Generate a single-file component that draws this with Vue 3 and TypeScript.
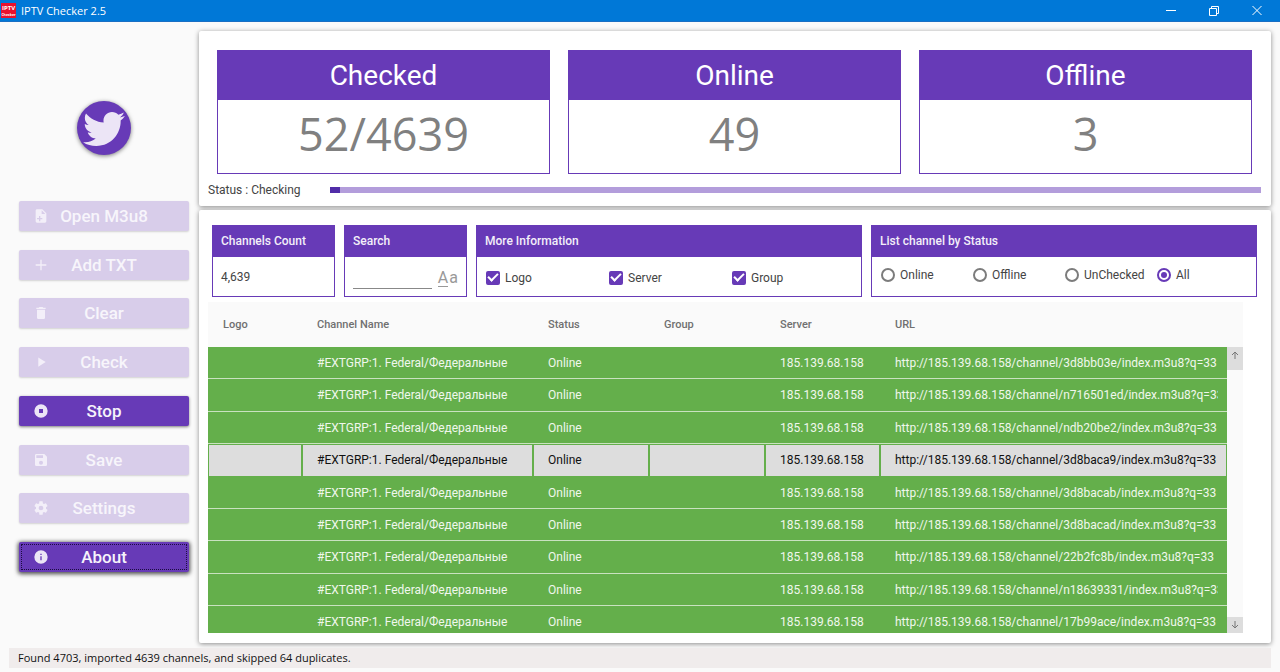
<script setup lang="ts">
import { ref } from 'vue'

interface Action {
  label: string
  icon: string
  enabled: boolean
}

interface Channel {
  name: string
  status: string
  server: string
  url: string
}

const actions: Action[] = [
  {
    label: 'Open M3u8',
    enabled: false,
    icon: 'M13,9H18.5L13,3.5V9M6,2H14L20,8V20A2,2 0 0,1 18,22H6C4.89,22 4,21.1 4,20V4C4,2.89 4.89,2 6,2M11,15V12H9V15H6V17H9V20H11V17H14V15H11Z',
  },
  { label: 'Add TXT', enabled: false, icon: 'M20,13H13V20H11V13H4V11H11V4H13V11H20V13Z' },
  {
    label: 'Clear',
    enabled: false,
    icon: 'M19,4H15.5L14.5,3H9.5L8.5,4H5V6H19M6,19A2,2 0 0,0 8,21H16A2,2 0 0,0 18,19V7H6V19Z',
  },
  { label: 'Check', enabled: false, icon: 'M8,5.14V19.14L19,12.14L8,5.14Z' },
  {
    label: 'Stop',
    enabled: true,
    icon: 'M12,2A10,10 0 0,0 2,12A10,10 0 0,0 12,22A10,10 0 0,0 22,12A10,10 0 0,0 12,2M9,9H15V15H9',
  },
  {
    label: 'Save',
    enabled: false,
    icon: 'M15,9H5V5H15M12,19A3,3 0 0,1 9,16A3,3 0 0,1 12,13A3,3 0 0,1 15,16A3,3 0 0,1 12,19M17,3H5C3.89,3 3,3.9 3,5V19A2,2 0 0,0 5,21H19A2,2 0 0,0 21,19V7L17,3Z',
  },
  {
    label: 'Settings',
    enabled: false,
    icon: 'M12,15.5A3.5,3.5 0 0,1 8.5,12A3.5,3.5 0 0,1 12,8.5A3.5,3.5 0 0,1 15.5,12A3.5,3.5 0 0,1 12,15.5M19.43,12.97C19.47,12.65 19.5,12.33 19.5,12C19.5,11.67 19.47,11.34 19.43,11L21.54,9.37C21.73,9.22 21.78,8.95 21.66,8.73L19.66,5.27C19.54,5.05 19.27,4.96 19.05,5.05L16.56,6.05C16.04,5.66 15.5,5.32 14.87,5.07L14.5,2.42C14.46,2.18 14.25,2 14,2H10C9.75,2 9.54,2.18 9.5,2.42L9.13,5.07C8.5,5.32 7.96,5.66 7.44,6.05L4.95,5.05C4.73,4.96 4.46,5.05 4.34,5.27L2.34,8.73C2.21,8.95 2.27,9.22 2.46,9.37L4.57,11C4.53,11.34 4.5,11.67 4.5,12C4.5,12.33 4.53,12.65 4.57,12.97L2.46,14.63C2.27,14.78 2.21,15.05 2.34,15.27L4.34,18.73C4.46,18.95 4.73,19.03 4.95,18.95L7.44,17.94C7.96,18.34 8.5,18.68 9.13,18.93L9.5,21.58C9.54,21.82 9.75,22 10,22H14C14.25,22 14.46,21.82 14.5,21.58L14.87,18.93C15.5,18.67 16.04,18.34 16.56,17.94L19.05,18.95C19.27,19.03 19.54,18.95 19.66,18.73L21.66,15.27C21.78,15.05 21.73,14.78 21.54,14.63L19.43,12.97Z',
  },
  {
    label: 'About',
    enabled: true,
    icon: 'M13,9H11V7H13M13,17H11V11H13M12,2A10,10 0 0,0 2,12A10,10 0 0,0 12,22A10,10 0 0,0 22,12A10,10 0 0,0 12,2Z',
  },
]
const focused = 'About'

const checked = 52
const total = 4639
const stats = [
  { label: 'Checked', value: `${checked}/${total}` },
  { label: 'Online', value: '49' },
  { label: 'Offline', value: '3' },
]
const progress = `${(checked / total) * 100}%`

const search = ref('')
const info = ref([
  { label: 'Logo', on: true },
  { label: 'Server', on: true },
  { label: 'Group', on: true },
])
const statuses = ['Online', 'Offline', 'UnChecked', 'All']
const status = ref('All')

const ids = ['3d8bb03e', 'n716501ed', 'ndb20be2', '3d8baca9', '3d8bacab', '3d8bacad', '22b2fc8b', 'n18639331', '17b99ace']
const channels: Channel[] = ids.map((id) => ({
  name: '#EXTGRP:1. Federal/Федеральные',
  status: 'Online',
  server: '185.139.68.158',
  url: `http://185.139.68.158/channel/${id}/index.m3u8?q=33`,
}))
const selected = ref(3)
</script>

<template>
  <div class="window">
    <header class="titlebar">
      <svg class="app-icon" viewBox="0 0 15 15" aria-hidden="true">
        <rect width="15" height="15" fill="#e8112d" />
        <text x="7.5" y="7" text-anchor="middle" font-size="6" font-weight="700" fill="#fff">IPTV</text>
        <text x="7.5" y="12.5" text-anchor="middle" font-size="3.5" font-weight="700" fill="#fff">Checker</text>
      </svg>
      <h1>IPTV Checker 2.5</h1>
      <button type="button" aria-label="Minimize">
        <svg viewBox="0 0 12 12"><path d="M1 5.5H11" /></svg>
      </button>
      <button type="button" aria-label="Restore">
        <svg viewBox="0 0 12 12"><path d="M1.5 3.5H8.5V10.5H1.5ZM3.5 3.5V1.5H10.5V8.5H8.5" /></svg>
      </button>
      <button type="button" aria-label="Close">
        <svg viewBox="0 0 12 12"><path d="M1.5 1L10.5 10M10.5 1L1.5 10" /></svg>
      </button>
    </header>

    <div class="body">
      <nav class="sidebar">
        <button class="twitter" type="button" aria-label="Twitter">
          <svg viewBox="0 0 24 24">
            <path
              d="M22.46,6C21.69,6.35 20.86,6.58 20,6.7C20.88,6.15 21.56,5.31 21.88,4.31C21.05,4.81 20.13,5.16 19.16,5.36C18.37,4.5 17.26,4 16,4C13.65,4 11.73,5.92 11.73,8.29C11.73,8.63 11.77,8.96 11.84,9.27C8.28,9.09 5.11,7.38 3,4.79C2.63,5.42 2.42,6.16 2.42,6.94C2.42,8.43 3.17,9.75 4.33,10.5C3.62,10.5 2.96,10.3 2.38,10V10.03C2.38,12.11 3.86,13.85 5.82,14.24C5.46,14.34 5.08,14.39 4.69,14.39C4.42,14.39 4.15,14.36 3.89,14.31C4.43,16 6,17.26 7.89,17.29C6.43,18.45 4.58,19.13 2.56,19.13C2.22,19.13 1.88,19.11 1.54,19.07C3.44,20.29 5.7,21 8.12,21C16,21 20.33,14.46 20.33,8.79C20.33,8.6 20.33,8.42 20.32,8.23C21.16,7.63 21.88,6.87 22.46,6Z"
            />
          </svg>
        </button>
        <div class="actions">
          <button
            v-for="action in actions"
            :key="action.label"
            type="button"
            class="action"
            :class="{ focused: action.label === focused }"
            :disabled="!action.enabled"
          >
            <svg viewBox="0 0 24 24" aria-hidden="true"><path fill-rule="evenodd" :d="action.icon" /></svg>
            <span>{{ action.label }}</span>
          </button>
        </div>
      </nav>

      <main class="content">
        <section class="card summary">
          <div class="stats">
            <div v-for="stat in stats" :key="stat.label" class="stat">
              <h2>{{ stat.label }}</h2>
              <p>{{ stat.value }}</p>
            </div>
          </div>
          <div class="progress-row">
            <span>Status : Checking</span>
            <div class="track" role="progressbar" :aria-valuenow="checked" aria-valuemin="0" :aria-valuemax="total">
              <div class="fill" :style="{ width: progress }"></div>
            </div>
          </div>
        </section>

        <section class="card list">
          <div class="filters">
            <div class="box">
              <h3>Channels Count</h3>
              <div class="box-body">4,639</div>
            </div>
            <div class="box">
              <h3><label for="search">Search</label></h3>
              <div class="box-body search">
                <input id="search" v-model="search" type="text" />
                <button type="button" aria-label="Match case"><u>A</u><span>a</span></button>
              </div>
            </div>
            <div class="box">
              <h3>More Information</h3>
              <div class="box-body checks">
                <label v-for="item in info" :key="item.label">
                  <input v-model="item.on" type="checkbox" />{{ item.label }}
                </label>
              </div>
            </div>
            <div class="box">
              <h3>List channel by Status</h3>
              <div class="box-body radios">
                <label v-for="item in statuses" :key="item">
                  <input v-model="status" type="radio" name="status" :value="item" />{{ item }}
                </label>
              </div>
            </div>
          </div>

          <div class="grid">
            <div class="table-area">
              <table>
                <colgroup>
                  <col class="c-logo" />
                  <col class="c-name" />
                  <col class="c-mid" />
                  <col class="c-mid" />
                  <col class="c-server" />
                  <col />
                </colgroup>
                <thead>
                  <tr>
                    <th>Logo</th>
                    <th>Channel Name</th>
                    <th>Status</th>
                    <th>Group</th>
                    <th>Server</th>
                    <th>URL</th>
                  </tr>
                </thead>
                <tbody>
                  <tr
                    v-for="(channel, i) in channels"
                    :key="channel.url"
                    :class="{ selected: i === selected }"
                    @click="selected = i"
                  >
                    <td></td>
                    <td>{{ channel.name }}</td>
                    <td>{{ channel.status }}</td>
                    <td></td>
                    <td>{{ channel.server }}</td>
                    <td><div class="url">{{ channel.url }}</div></td>
                  </tr>
                </tbody>
              </table>
            </div>
            <div class="scrollbar">
              <button class="up" type="button" aria-label="Scroll up">
                <svg viewBox="0 0 10 10"><path d="M5 9V2M2 5L5 2L8 5" /></svg>
              </button>
              <button type="button" aria-label="Scroll down">
                <svg viewBox="0 0 10 10"><path d="M5 1V8M2 5L5 8L8 5" /></svg>
              </button>
            </div>
          </div>
        </section>
      </main>
    </div>

    <footer>Found 4703, imported 4639 channels, and skipped 64 duplicates.</footer>
  </div>
</template>

<style>
body {
  margin: 0;
  background: #fafafa;
}
</style>

<style scoped>
.window,
.window * {
  box-sizing: border-box;
}

.window {
  --purple: #673ab7;
  display: flex;
  flex-direction: column;
  height: 100vh;
  background: #fafafa;
  color: #444;
  font: 12px/16px Roboto, 'Liberation Sans', sans-serif;
}

button,
input {
  margin: 0;
  padding: 0;
  border: 0;
  font: inherit;
}

h1,
h2,
h3,
p {
  margin: 0;
  font-weight: 400;
}

.titlebar {
  display: flex;
  align-items: center;
  flex: none;
  height: 22px;
  padding: 0 2px 0 1px;
  background: #0078d7;
  border-bottom: 1px solid #1a6fc4;
  color: #fff;
}

.app-icon {
  width: 15px;
  height: 15px;
  font-family: 'Open Sans', sans-serif;
}

.titlebar h1 {
  flex: 1;
  padding-left: 5px;
  font: 11px/16px 'Open Sans', 'Noto Sans', sans-serif;
}

.titlebar button {
  display: grid;
  place-items: center;
  width: 43px;
  height: 20px;
  background: none;
}

.titlebar button svg {
  width: 12px;
  height: 12px;
  fill: none;
  stroke: #fff;
}

.body {
  display: flex;
  flex: 1;
  min-height: 0;
}

.sidebar {
  display: flex;
  flex-direction: column;
  align-items: center;
  flex: none;
  width: 199px;
  padding: 79px 10px 0 19px;
}

.twitter {
  display: grid;
  place-items: center;
  width: 54px;
  height: 54px;
  border-radius: 50%;
  background: var(--purple);
  box-shadow: 0 1px 4px rgba(0, 0, 0, 0.5);
}

.twitter svg {
  width: 48px;
  height: 48px;
  fill: #ece5f6;
}

.actions {
  display: flex;
  flex-direction: column;
  justify-content: space-between;
  width: 100%;
  height: 371px;
  margin-top: 46px;
}

.action {
  display: grid;
  grid-template-columns: 16px 1fr 16px;
  align-items: center;
  height: 30px;
  padding: 0 14px;
  border-radius: 2px;
  background: var(--purple);
  color: #f6f3fb;
  font-size: 17px;
  font-weight: 500;
  line-height: 20px;
  box-shadow: 0 1px 3px rgba(0, 0, 0, 0.5);
}

.action svg {
  width: 16px;
  height: 16px;
  fill: #ece5f6;
}

.action:disabled {
  background: #d8cdea;
  color: #f7f5fb;
  box-shadow: 0 1px 2px rgba(0, 0, 0, 0.16);
}

.action:disabled svg {
  fill: #f3eff9;
}

.action.focused {
  outline: 1px dotted #1c0c40;
  outline-offset: -3px;
  box-shadow: 0 1px 4px 1px rgba(0, 0, 0, 0.7);
}

.content {
  display: flex;
  flex-direction: column;
  flex: 1;
  gap: 4px;
  min-width: 0;
  padding: 9px 9px 5px 0;
}

.card {
  background: #fff;
  border-radius: 2px;
  box-shadow: 0 1px 5px rgba(0, 0, 0, 0.45);
}

.summary {
  padding: 19px 10px 8px 9px;
}

.stats {
  display: grid;
  grid-template-columns: repeat(3, 1fr);
  gap: 18px;
  padding: 0 9px;
}

.stat {
  border: 1px solid var(--purple);
  text-align: center;
}

.stat h2 {
  height: 49px;
  background: var(--purple);
  color: #fff;
  font-size: 28px;
  line-height: 50px;
}

.stat p {
  height: 73px;
  color: #808080;
  font: 45px/68px 'Open Sans', 'Noto Sans', sans-serif;
}

.progress-row {
  display: flex;
  align-items: center;
  height: 16px;
  margin-top: 8px;
}

.progress-row span {
  width: 122px;
}

.track {
  flex: 1;
  height: 6px;
  background: #b39ddb;
}

.fill {
  height: 100%;
  background: #512da8;
}

.list {
  display: flex;
  flex-direction: column;
  flex: 1;
  min-height: 0;
  padding: 15px 9px 10px;
}

.filters {
  display: grid;
  grid-template-columns: minmax(0, 123fr) minmax(0, 123fr) minmax(0, 386fr) minmax(0, 386fr);
  gap: 9px;
  padding: 0 5px 0 4px;
}

.box {
  border: 1px solid var(--purple);
}

.box h3 {
  height: 31px;
  padding: 0 8px;
  background: var(--purple);
  color: #f3eff9;
  font-size: 12px;
  font-weight: 500;
  line-height: 31px;
  white-space: nowrap;
}

.box-body {
  display: flex;
  align-items: center;
  height: 39px;
  padding: 0 8px;
}

.search {
  gap: 6px;
}

.search input {
  flex: 1;
  min-width: 0;
  height: 24px;
  border-bottom: 1px solid #888;
  background: none;
  outline: none;
}

.search button {
  display: flex;
  align-items: flex-start;
  gap: 1px;
  margin-top: 4px;
  background: none;
  color: #999;
  font-size: 16px;
  line-height: 16px;
}

.search u {
  border-bottom: 1px solid #999;
  text-decoration: none;
}

.checks label,
.radios label {
  display: flex;
  align-items: center;
  gap: 5px;
  flex: none;
}

.checks {
  padding-top: 2px;
}

.checks label {
  width: 123px;
}

.radios {
  padding-bottom: 4px;
}

.radios label {
  width: 92px;
}

.box-body input[type='checkbox'],
.box-body input[type='radio'] {
  display: grid;
  place-items: center;
  flex: none;
  width: 14px;
  height: 14px;
  margin-left: 1px;
  appearance: none;
}

.box-body input[type='checkbox'] {
  border: 2px solid #666;
  border-radius: 2px;
}

.box-body input[type='checkbox']:checked {
  border-color: var(--purple);
  background: var(--purple);
}

.box-body input[type='checkbox']:checked::after {
  width: 10px;
  height: 6px;
  margin-bottom: 3px;
  border: solid #fff;
  border-width: 0 0 2px 2px;
  box-sizing: border-box;
  content: '';
  transform: rotate(-45deg);
}

.box-body input[type='radio'] {
  border: 2px solid #7c7c7c;
  border-radius: 50%;
}

.box-body input[type='radio']:checked {
  border-color: var(--purple);
}

.box-body input[type='radio']:checked::after {
  width: 6px;
  height: 6px;
  border-radius: 50%;
  background: var(--purple);
  content: '';
}

.grid {
  display: flex;
  flex: 1;
  min-height: 0;
  margin: 5px 19px 0 0;
  overflow: hidden;
  background: #fafafa;
}

.table-area {
  flex: 1;
  min-width: 0;
}

table {
  width: 100%;
  table-layout: fixed;
  border-collapse: separate;
  border-spacing: 0;
}

.c-logo {
  width: 94px;
}

.c-name {
  width: 231px;
}

.c-mid {
  width: 116px;
}

.c-server {
  width: 115px;
}

th {
  height: 45px;
  padding: 0 0 0 15px;
  color: #707070;
  font-size: 11px;
  font-weight: 500;
  text-align: left;
}

td {
  height: 32px;
  padding: 0 9px 1px 15px;
  background: #64af4b;
  box-shadow: inset 0 -1px #c9e2c0;
  color: #f0f7ed;
  white-space: nowrap;
}

tr:nth-child(5n + 2) td,
tr:nth-child(5n + 4) td {
  height: 33px;
}

.selected td {
  padding: 0 8px 1px 14px;
  border: 1px solid #64af4b;
  background: #ddd;
  box-shadow: none;
  color: #111;
}

.url {
  overflow: hidden;
}

.scrollbar {
  display: flex;
  flex-direction: column;
  justify-content: space-between;
  flex: none;
  width: 16px;
  margin-top: 45px;
}

.scrollbar button {
  display: grid;
  justify-items: center;
  align-content: center;
  height: 16px;
  background: #ddd;
}

.scrollbar .up {
  height: 23px;
  padding-bottom: 7px;
}

.scrollbar svg {
  width: 10px;
  height: 10px;
  fill: none;
  stroke: #777;
}

footer {
  flex: none;
  height: 20px;
  margin: 0 9px 4px;
  padding-left: 9px;
  background: #f0ecec;
  color: #111;
  font: 11px/20px 'Open Sans', 'Noto Sans', sans-serif;
}
</style>
